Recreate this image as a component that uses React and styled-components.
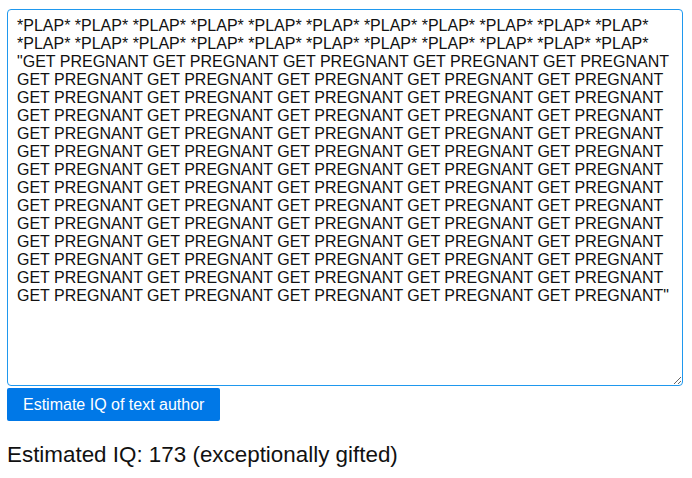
import React, { useEffect, useRef } from 'react'
import styled, { createGlobalStyle } from 'styled-components'

const GlobalStyle = createGlobalStyle`
  body {
    margin: 0;
    background: #fff;
    font-family: "Liberation Sans", Arial, sans-serif;
    color: #111;
  }
`

const Page = styled.main`
  display: flex;
  flex-direction: column;
  align-items: flex-start;
  padding: 9px 9px 0 7px;
`

const TextBox = styled.textarea`
  display: block;
  box-sizing: border-box;
  width: 100%;
  height: 377px;
  margin: 0;
  padding: 7px 8px 7px 9px;
  border: 1px solid #1f98ee;
  border-radius: 4px;
  outline: none;
  font-family: "Liberation Sans", Arial, sans-serif;
  font-size: 16px;
  line-height: 18px;
  color: #111;
  resize: both;
  overflow: hidden;
`

const EstimateButton = styled.button`
  margin-top: 2px;
  height: 33px;
  padding: 0 16px;
  border: none;
  border-radius: 2px;
  background: #0078e7;
  color: #fff;
  font-family: "Liberation Sans", Arial, sans-serif;
  font-size: 16px;
  cursor: pointer;
`

const Result = styled.p`
  margin: 21px 0 0;
  font-size: 22.4px;
  line-height: 25px;
  color: #111;
`

const plaps = Array(22).fill('*PLAP*').join(' ')
const pregnant = Array(70).fill('GET PREGNANT').join(' ')
const initialText = `${plaps} "${pregnant}"`

export default function App() {
  const boxRef = useRef(null)

  useEffect(() => {
    const box = boxRef.current
    if (box) {
      box.focus()
      box.setSelectionRange(initialText.length, initialText.length)
    }
  }, [])

  return (
    <>
      <GlobalStyle />
      <Page>
        <TextBox ref={boxRef} defaultValue={initialText} spellCheck={false} />
        <EstimateButton>Estimate IQ of text author</EstimateButton>
        <Result>Estimated IQ: 173 (exceptionally gifted)</Result>
      </Page>
    </>
  )
}
